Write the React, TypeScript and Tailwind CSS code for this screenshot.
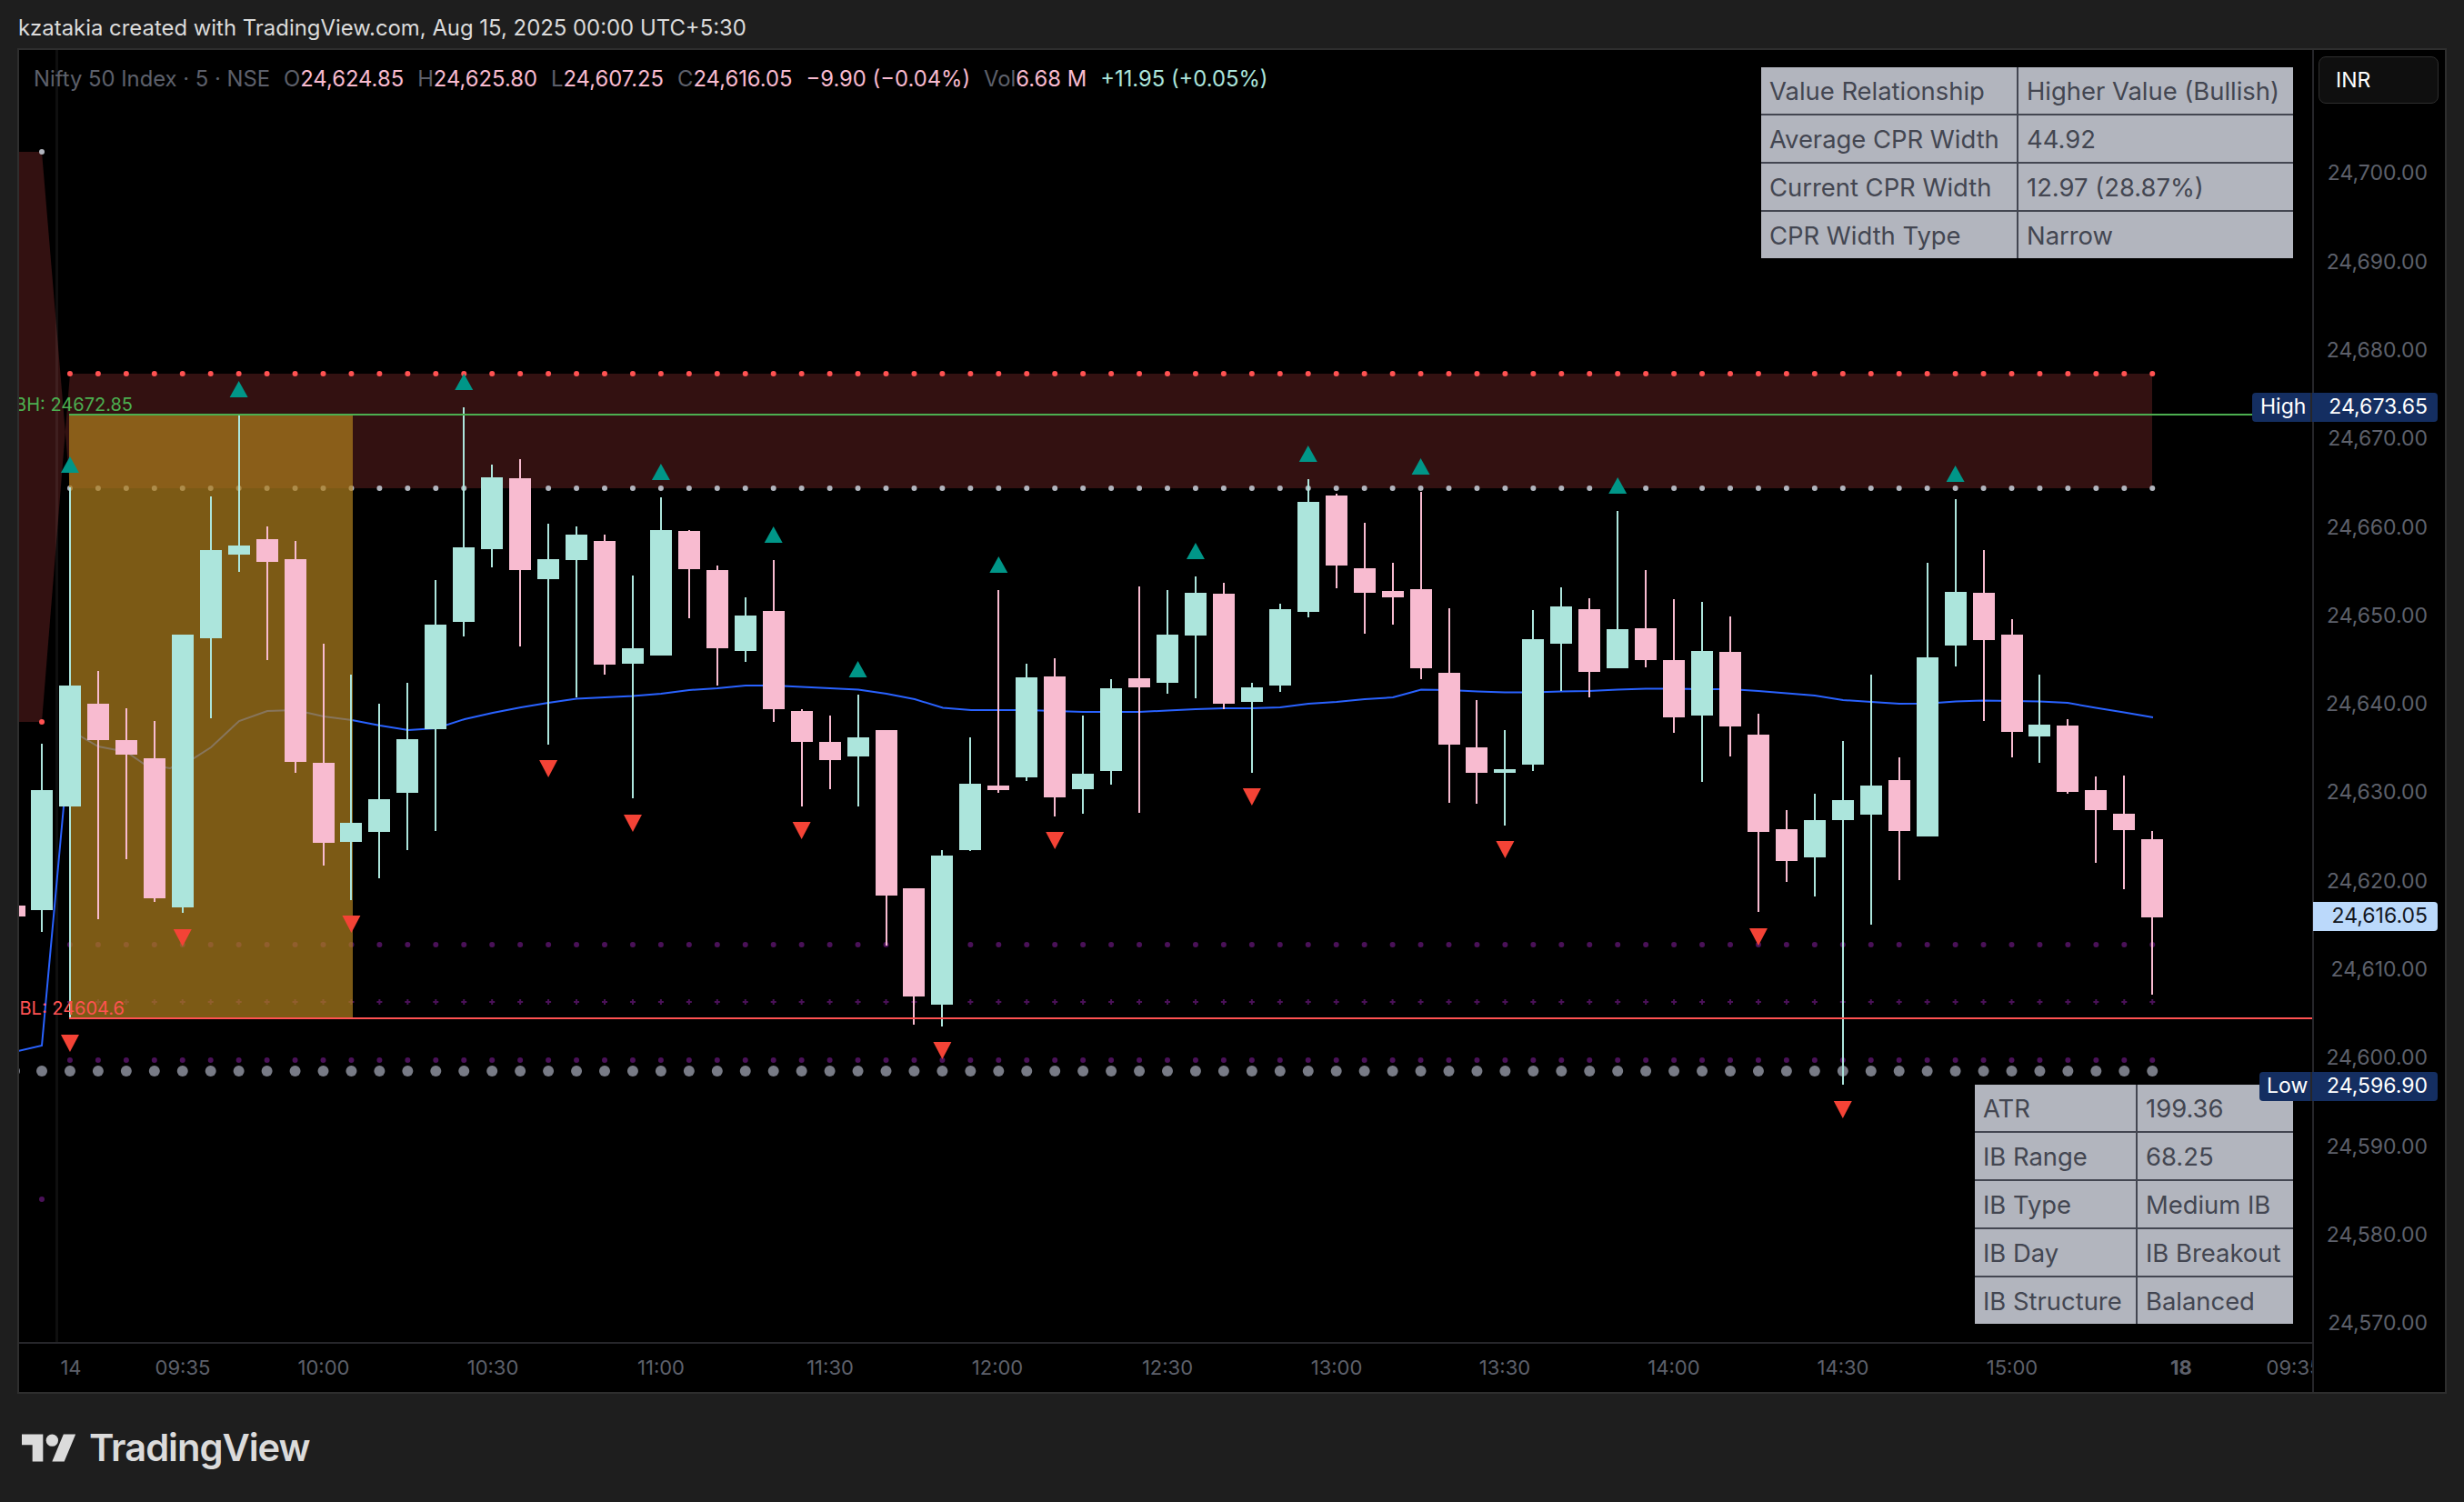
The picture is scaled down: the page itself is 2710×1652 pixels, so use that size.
const stepX = 30.95;
const candleX = (i: number) => 46 + stepX * i;
const range = (from: number, to: number) => {
  const out: number[] = [];
  for (let i = from; i <= to; i++) out.push(i);
  return out;
};

// [up, wickTop, bodyTop, bodyBottom, wickBottom], page pixels, starting at the candle of x=46
const candles: [number, number, number, number, number][] = [
  [1, 818, 869, 1001, 1025], [1, 536, 754, 887, 1119], [0, 738, 774, 814, 1011], [0, 779, 814, 830, 945],
  [0, 793, 834, 988, 992], [1, 698, 698, 998, 1004], [1, 546, 605, 702, 790], [1, 456, 600, 610, 629],
  [0, 579, 593, 618, 726], [0, 595, 615, 838, 850], [0, 708, 839, 927, 952], [1, 742, 905, 926, 990],
  [1, 774, 879, 915, 966], [1, 751, 813, 872, 935], [1, 638, 687, 802, 914], [1, 448, 602, 684, 700],
  [1, 511, 525, 604, 624], [0, 505, 526, 627, 711], [1, 576, 615, 637, 819], [1, 579, 588, 616, 767],
  [0, 588, 595, 731, 742], [1, 633, 713, 730, 878], [1, 547, 583, 721, 721], [0, 583, 584, 626, 680],
  [0, 622, 627, 713, 754], [1, 657, 677, 716, 728], [0, 616, 672, 780, 794], [0, 780, 782, 816, 887],
  [0, 787, 816, 836, 868], [1, 764, 811, 832, 887], [0, 803, 803, 985, 1040], [0, 977, 977, 1096, 1127],
  [1, 935, 941, 1105, 1129], [1, 811, 862, 935, 936], [0, 649, 864, 869, 872], [1, 730, 745, 855, 859],
  [0, 724, 744, 877, 898], [1, 787, 851, 868, 895], [1, 747, 757, 848, 863], [0, 645, 746, 756, 894],
  [1, 649, 698, 751, 763], [1, 634, 652, 699, 768], [0, 641, 653, 774, 780], [1, 751, 756, 772, 850],
  [1, 664, 670, 754, 761], [1, 527, 552, 673, 679], [0, 543, 545, 622, 647], [0, 575, 625, 652, 697],
  [0, 619, 650, 657, 687], [0, 541, 648, 735, 747], [0, 669, 740, 819, 883], [0, 770, 822, 850, 884],
  [1, 803, 846, 850, 908], [1, 671, 703, 841, 848], [1, 646, 667, 708, 760], [0, 658, 670, 739, 767],
  [1, 562, 692, 735, 735], [0, 627, 691, 726, 734], [0, 659, 726, 789, 806], [1, 662, 716, 787, 860],
  [0, 678, 717, 799, 832], [0, 785, 808, 915, 1003], [0, 891, 912, 947, 970], [1, 873, 902, 943, 986],
  [1, 815, 880, 902, 1193], [1, 742, 864, 896, 1017], [0, 833, 858, 914, 968], [1, 619, 723, 920, 920],
  [1, 549, 651, 710, 733], [0, 605, 652, 704, 793], [0, 681, 698, 805, 833], [1, 742, 797, 810, 839],
  [0, 791, 798, 871, 873], [0, 854, 869, 891, 949], [0, 853, 895, 913, 978], [0, 914, 923, 1009, 1094],
];

const maLine =
  "20,1156 46,1150 70,887 77,800 89,810 108,821 139,827 158,840 187,845 213,834 232,822 263,793 294,782 325,781 356,788 387,792 418,798 449,803 480,801 511,791 542,784 573,778 603,773 634,768.5 665,767 696,765.5 727,763 758,759 789,757 820,754 851,754 882,755.5 913,757 944,758.6 975,763 1006,769 1037,778.5 1068,781 1099,781 1129,781 1160,782 1191,783 1222,783 1253,783 1284,781.5 1315,780 1346,779 1377,779 1408,778 1439,774 1470,772 1501,769 1532,767 1563,758.6 1594,759 1625,760.5 1655,761.6 1686,761.6 1717,760.5 1748,760 1779,758.6 1810,757.5 1841,757.5 1872,758 1903,758 1934,760 1965,762.4 1996,765 2027,770 2058,772 2089,774 2120,773.7 2151,771.4 2181,770.5 2212,771 2243,771.4 2274,773 2305,778.6 2336,783.5 2368,789";

// [candle, top y]
const upMarks = [[1, 502], [7, 419], [15, 411], [22, 510], [26, 579], [29, 727], [34, 612], [41, 597], [45, 490], [49, 504], [56, 525], [68, 512]];
const downMarks = [[1, 1138], [5, 1022], [11, 1007], [18, 836], [21, 896], [27, 904], [32, 1146], [36, 915], [43, 867], [52, 925], [61, 1021], [64, 1211]];

const priceTicks = ["24,700.00", "24,690.00", "24,680.00", "24,670.00", "24,660.00", "24,650.00", "24,640.00", "24,630.00", "24,620.00", "24,610.00", "24,600.00", "24,590.00", "24,580.00", "24,570.00"];
const timeTicks: [string, number, boolean?][] = [
  ["14", 78], ["09:35", 201], ["10:00", 356], ["10:30", 542], ["11:00", 727], ["11:30", 913], ["12:00", 1097], ["12:30", 1284],
  ["13:00", 1470], ["13:30", 1655], ["14:00", 1841], ["14:30", 2027], ["15:00", 2213], ["18", 2399, true], ["09:35", 2523],
];

const cprRows = [
  ["Value Relationship", "Higher Value (Bullish)"],
  ["Average CPR Width", "44.92"],
  ["Current CPR Width", "12.97 (28.87%)"],
  ["CPR Width Type", "Narrow"],
];
const ibRows = [
  ["ATR", "199.36"],
  ["IB Range", "68.25"],
  ["IB Type", "Medium IB"],
  ["IB Day", "IB Breakout"],
  ["IB Structure", "Balanced"],
];

function StatTable({ rows, className }: { rows: string[][]; className: string }) {
  return (
    <div className={`absolute grid bg-[#434651] gap-[2px] text-[#434651] text-[27.4px] ${className}`}>
      {rows.flat().map((cell, i) => (
        <div key={i} className="bg-[#b2b5be] flex items-center pl-[9px] pt-[3px] whitespace-nowrap overflow-hidden">
          {cell}
        </div>
      ))}
    </div>
  );
}

function Chart() {
  return (
    <svg viewBox="21 55 2522 1421" className="block w-[2522px] h-[1421px]">
      <polygon points="20,167 46,167 71.8,475 46,794 20,794" fill="#331111" />
      <polygon points="71.8,475 77,411 77,537" fill="#331111" />
      <rect x="77" y="411" width="2290" height="126" fill="#331111" />
      <rect x="61" y="55" width="3" height="1421" fill="#ffffff" fillOpacity="0.06" />

      {range(1, 75).map((i) => (
        <g key={i}>
          <circle cx={candleX(i)} cy="411" r="3" fill="#ff5252" />
          <circle cx={candleX(i)} cy="537" r="3" fill="#b2b5be" />
          <circle cx={candleX(i)} cy="1039" r="3" fill="#4a1158" />
          <path d={`M${candleX(i) - 3} 1102h6M${candleX(i)} 1099v6`} stroke="#4a1158" strokeWidth="2" />
          <circle cx={candleX(i)} cy="1166" r="3" fill="#4a1158" />
        </g>
      ))}
      {range(0, 75).map((i) => (
        <circle key={i} cx={candleX(i)} cy="1178" r="6" fill="#787b86" />
      ))}
      <circle cx="16" cy="1178" r="6" fill="#787b86" />
      <circle cx="46" cy="167" r="3" fill="#b2b5be" />
      <circle cx="46" cy="794" r="3" fill="#ff5252" />
      <circle cx="46" cy="1319" r="3" fill="#4a1158" />

      <polyline points={maLine} fill="none" stroke="#2962ff" strokeWidth="2" />
      <rect x="76" y="456" width="312" height="663" fill="#ac7d1d" fillOpacity="0.72" />

      <rect x="20" y="996" width="8" height="12" fill="#f8bbd0" />
      {candles.map(([up, wt, bt, bb, wb], i) => {
        const x = candleX(i);
        const fill = up ? "#ace5dc" : "#f8bbd0";
        return (
          <g key={i} fill={fill} shapeRendering="crispEdges">
            <rect x={x - 1} y={wt} width="2" height={wb - wt} />
            <rect x={x - 12} y={bt} width="24" height={bb - bt} />
          </g>
        );
      })}

      <rect x="76" y="455" width="2401" height="2" fill="#4caf50" />
      <rect x="76" y="1119" width="2467" height="2" fill="#ff5252" />

      {upMarks.map(([i, y]) => (
        <polygon key={i} points={`${candleX(i) - 10},${y + 18} ${candleX(i) + 10},${y + 18} ${candleX(i)},${y}`} fill="#009688" />
      ))}
      {downMarks.map(([i, y]) => (
        <polygon key={i} points={`${candleX(i) - 10},${y} ${candleX(i) + 10},${y} ${candleX(i)},${y + 19}`} fill="#f44336" />
      ))}

      <text x="146" y="452" textAnchor="end" fontSize="20" fill="#4caf50">IBH: 24672.85</text>
      <text x="137" y="1116" textAnchor="end" fontSize="20" fill="#ff5252">IBL: 24604.6</text>
    </svg>
  );
}

export default function App() {
  return (
    <div className="w-[2710px] h-[1652px] bg-[#1e1e1e] flex flex-col [font-family:Inter,sans-serif]">
      <div className="h-[53px] flex items-center pl-5 pt-[9px] text-[23.9px] text-[#dbdbdb]">
        kzatakia created with TradingView.com, Aug 15, 2025 00:00 UTC+5:30
      </div>

      <div className="relative ml-[19px] mr-[19px] h-[1480px] border-2 border-[#2e2e2e] bg-black flex">
        <div className="relative w-[2522px] shrink-0 flex flex-col overflow-hidden">
          <Chart />
          <div className="relative flex-1 border-t-2 border-[#26262a] text-[22px] text-[#5d606b]">
            {timeTicks.map(([label, x, bold]) => (
              <span
                key={x}
                className={`absolute top-[10px] -translate-x-1/2 ${bold ? "font-bold" : ""}`}
                style={{ left: x - 21 }}
              >
                {label}
              </span>
            ))}
          </div>

          <div className="absolute top-[14px] left-[16px] flex items-center text-[23.8px] text-[#5d606b] whitespace-nowrap">
            <span className="mr-[15px]">Nifty 50 Index · 5 · NSE</span>
            <span>O</span><span className="text-[#f8bbd0] mr-[15px]">24,624.85</span>
            <span>H</span><span className="text-[#f8bbd0] mr-[15px]">24,625.80</span>
            <span>L</span><span className="text-[#f8bbd0] mr-[15px]">24,607.25</span>
            <span>C</span><span className="text-[#f8bbd0] mr-[15px]">24,616.05</span>
            <span className="text-[#f8bbd0] mr-[15px]">−9.90 (−0.04%)</span>
            <span>Vol</span><span className="text-[#f8bbd0] mr-[15px]">6.68 M</span>
            <span className="text-[#ace5dc]">+11.95 (+0.05%)</span>
          </div>

          <StatTable rows={cprRows} className="left-[1916px] top-[19px] w-[585px] h-[210px] grid-cols-[281px_302px] grid-rows-4" />
          <StatTable rows={ibRows} className="left-[2151px] top-[1138px] w-[350px] h-[263px] grid-cols-[177px_171px] grid-rows-5" />
        </div>

        <div className="relative flex-1 border-l-2 border-[#26262a] flex flex-col">
          <div className="pt-[87px] pr-[19px] text-right text-[23px] text-[#5d606b]">
            {priceTicks.map((p) => (
              <div key={p} className="h-[97.3px] flex items-center justify-end">{p}</div>
            ))}
          </div>
          <div className="absolute left-[5px] top-[7px] w-[132px] h-[52px] rounded-lg border border-[#2e2e2e] bg-[#0f0f0f] flex items-center pl-[18px] text-[23px] text-white">
            INR
          </div>
        </div>

        <div className="absolute left-[2456px] top-[377px] w-[204px] h-[32px] rounded bg-[#142e61] flex items-center text-[23px] text-white">
          <span className="w-[66px] pl-[9px] border-r-2 border-[#26262a] leading-[30px] pb-[2px]">High</span>
          <span className="flex-1 text-right pr-[11px] pb-[2px]">24,673.65</span>
        </div>
        <div className="absolute left-[2464px] top-[1124px] w-[196px] h-[32px] rounded bg-[#142e61] flex items-center text-[23px] text-white">
          <span className="w-[58px] pl-[8px] border-r-2 border-[#26262a] leading-[30px] pb-[2px]">Low</span>
          <span className="flex-1 text-right pr-[11px] pb-[2px]">24,596.90</span>
        </div>
        <div className="absolute left-[2523px] top-[937px] w-[137px] h-[32px] rounded-r bg-[#bbd9fb] flex items-center justify-end pr-[11px] pb-[2px] text-[23px] text-[#131722]">
          24,616.05
        </div>
      </div>

      <div className="flex-1 flex items-center pl-6 gap-[14px]">
        <svg viewBox="0 4 36 18" className="w-[60px] h-[31px] fill-[#dbdbdb]">
          <path d="M14 22H7V11H0V4h14v18zM28 22h-8l7.5-18h8L28 22z" />
          <circle cx="20" cy="8" r="4" />
        </svg>
        <span className="text-[41.7px] font-semibold text-[#dbdbdb] tracking-tight leading-none">TradingView</span>
      </div>
    </div>
  );
}
